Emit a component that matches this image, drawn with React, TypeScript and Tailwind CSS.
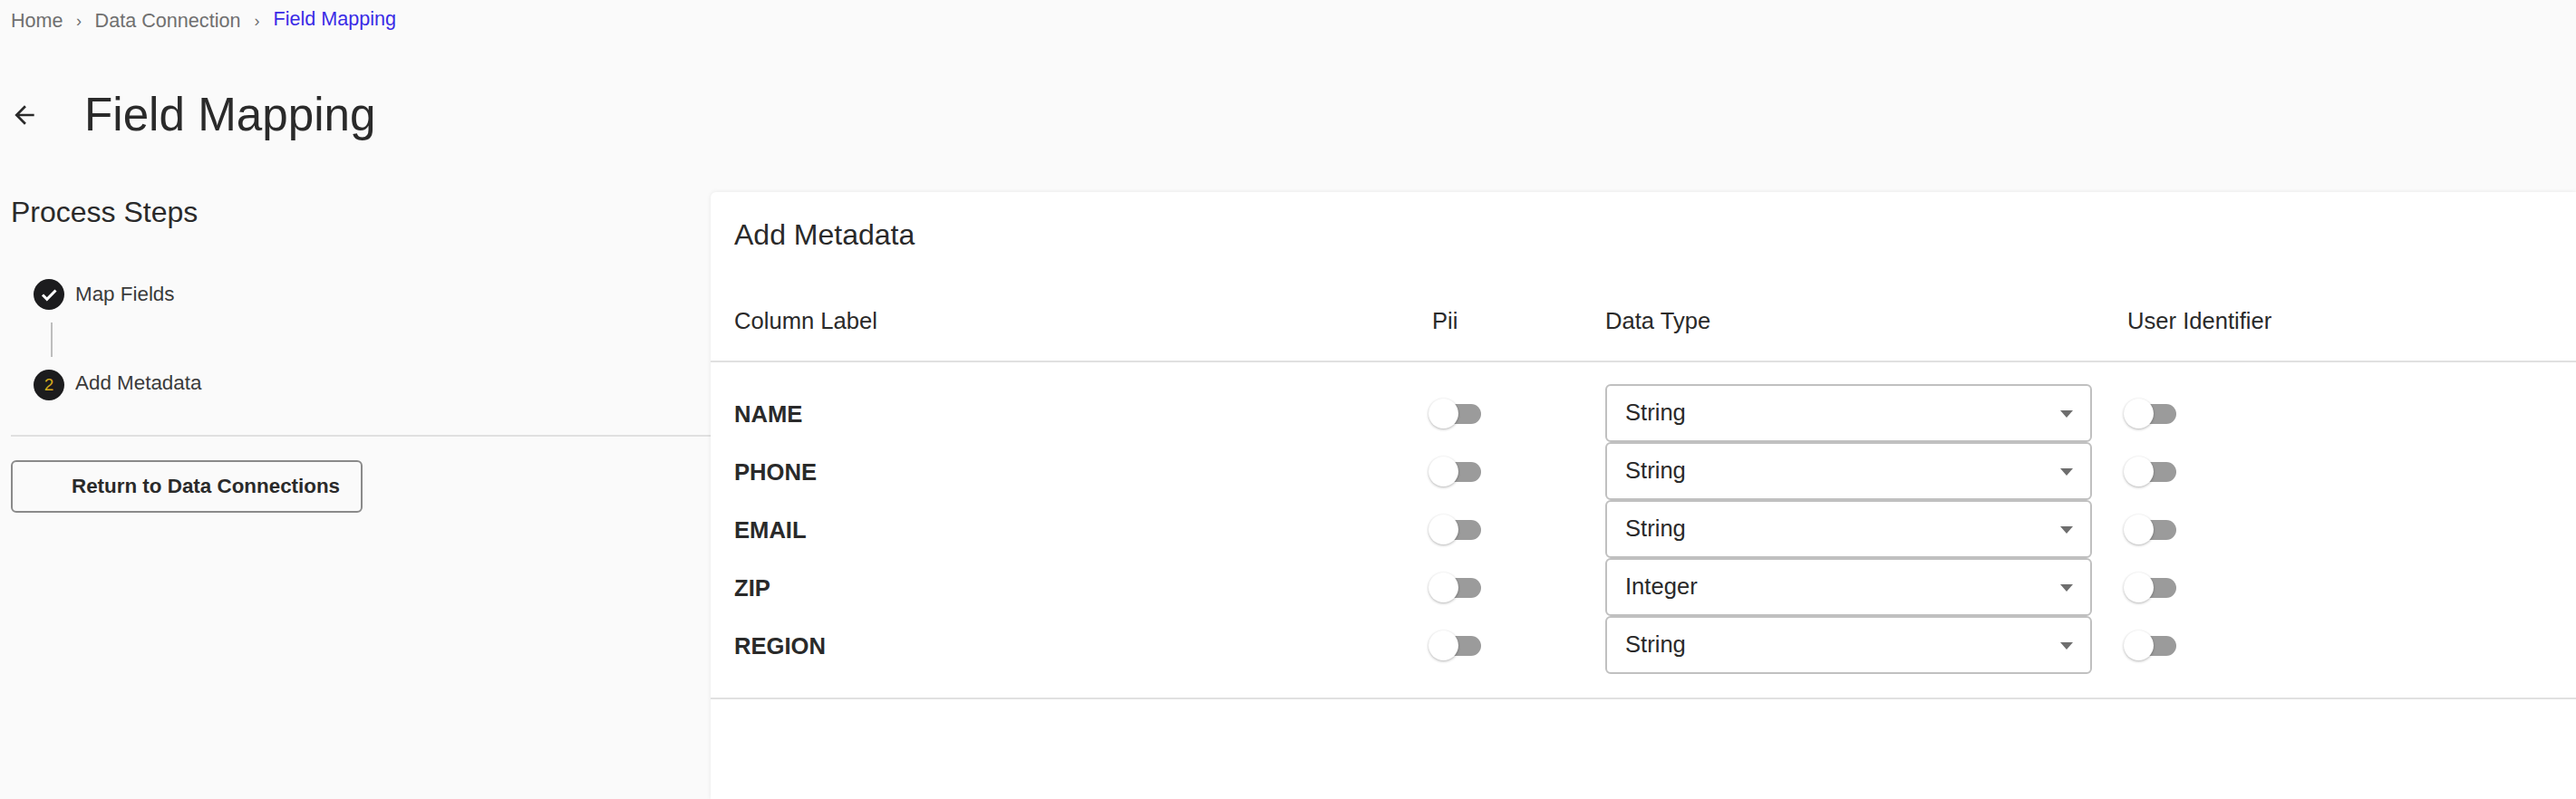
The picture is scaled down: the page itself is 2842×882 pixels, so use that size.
import React from "react";

const rows = [
  { label: "NAME", type: "String" },
  { label: "PHONE", type: "String" },
  { label: "EMAIL", type: "String" },
  { label: "ZIP", type: "Integer" },
  { label: "REGION", type: "String" },
];

const Toggle = () => (
  <div className="relative h-[22px] w-[54px] rounded-full bg-[#9b9b9b]">
    <div className="absolute -top-[6px] -left-[4px] h-[33px] w-[33px] rounded-full bg-white shadow-[0_1px_3px_rgba(0,0,0,0.3)]" />
  </div>
);

const TypeSelect = ({ value }: { value: string }) => (
  <div className="-mt-[3px] flex h-[64px] w-[537px] items-center justify-between rounded-[6px] border-2 border-[#c0c0c0] bg-white pr-[19px] pl-[20px] text-[25.6px] text-[#2a2a2a]">
    <span>{value}</span>
    <svg width="14" height="8" viewBox="0 0 14 8" className="mt-[2px]">
      <path d="M0 0h14L7 8z" fill="#6e6e6e" />
    </svg>
  </div>
);

export default function App() {
  return (
    <div className="h-[882px] overflow-hidden bg-[#fafafa] font-['Liberation_Sans',Arial,sans-serif] text-[#2a2a2a]">
      {/* breadcrumb */}
      <nav className="flex h-[46px] items-center pl-[12px] text-[21.6px] text-[#707070]">
        <span>Home</span>
        <span className="w-[35px] text-center text-[18px]">›</span>
        <span>Data Connection</span>
        <span className="w-[36px] text-center text-[18px]">›</span>
        <span className="-mt-[3px] text-[#3a2be6]">Field Mapping</span>
      </nav>

      {/* title */}
      <header className="mt-[41px] flex h-[80px] items-center pl-[12px]">
        <svg width="32" height="32" viewBox="0 0 24 24" className="-ml-[1px]" fill="#2a2a2a">
          <path d="M20 11H7.83l5.59-5.59L12 4l-8 8 8 8 1.41-1.41L7.83 13H20v-2z" />
        </svg>
        <h1 className="ml-[50px] text-[51.2px] leading-none font-normal">Field Mapping</h1>
      </header>

      <div className="mt-[45px] flex">
        {/* process steps */}
        <aside className="w-[784px] shrink-0 pl-[12px]">
          <h2 className="flex h-[44px] items-center text-[32px]">Process Steps</h2>
          <div className="mt-[52px] pl-[25px]">
            <div className="flex h-[34px] items-center gap-[12px]">
              <div className="flex h-[34px] w-[34px] items-center justify-center rounded-full bg-[#1c1c1e]">
                <svg width="24" height="24" viewBox="0 0 24 24" fill="none" stroke="#ffffff" strokeWidth="3">
                  <path d="M5 12.5l4.8 4.8L19.5 7.5" />
                </svg>
              </div>
              <span className="-mt-[1px] text-[22.4px] text-[#3a3a3a]">Map Fields</span>
            </div>
            <div className="my-[14px] ml-[19px] h-[38px] w-[2px] bg-[#bdbdbd]" />
            <div className="flex h-[34px] items-center gap-[12px]">
              <div className="flex h-[34px] w-[34px] items-center justify-center rounded-full bg-[#1c1c1e] text-[19px] text-[#d4aa1e]">
                2
              </div>
              <span className="-mt-[4px] text-[22.4px] text-[#3a3a3a]">Add Metadata</span>
            </div>
          </div>
          <div className="mt-[38px] h-[2px] bg-[#e0e0e0]" />
          <button className="mt-[26px] flex h-[58px] w-[388px] items-center rounded-[6px] border-2 border-[#8a8a8a] pl-[65px] text-[22.4px] font-bold">
            Return to Data Connections
          </button>
        </aside>

        {/* metadata card */}
        <main className="h-[670px] flex-1 rounded-tl-[6px] bg-white shadow-[0_0_5px_rgba(0,0,0,0.08)]">
          <h2 className="flex h-[94px] items-center pl-[26px] text-[32px]">Add Metadata</h2>
          <div className="grid h-[94px] grid-cols-[770px_191px_576px_1fr] items-center border-b-2 border-[#e0e0e0] pt-[4px] pl-[26px] text-[25.6px]">
            <span>Column Label</span>
            <span>Pii</span>
            <span>Data Type</span>
            <span>User Identifier</span>
          </div>
          <div className="border-b-2 border-[#e0e0e0] pt-[25px] pb-[25px]">
            {rows.map((row) => (
              <div
                key={row.label}
                className="grid h-[64px] grid-cols-[770px_191px_576px_1fr] items-center pl-[26px] text-[25.6px]"
              >
                <span className="font-bold">{row.label}</span>
                <Toggle />
                <TypeSelect value={row.type} />
                <Toggle />
              </div>
            ))}
          </div>
        </main>
      </div>
    </div>
  );
}
